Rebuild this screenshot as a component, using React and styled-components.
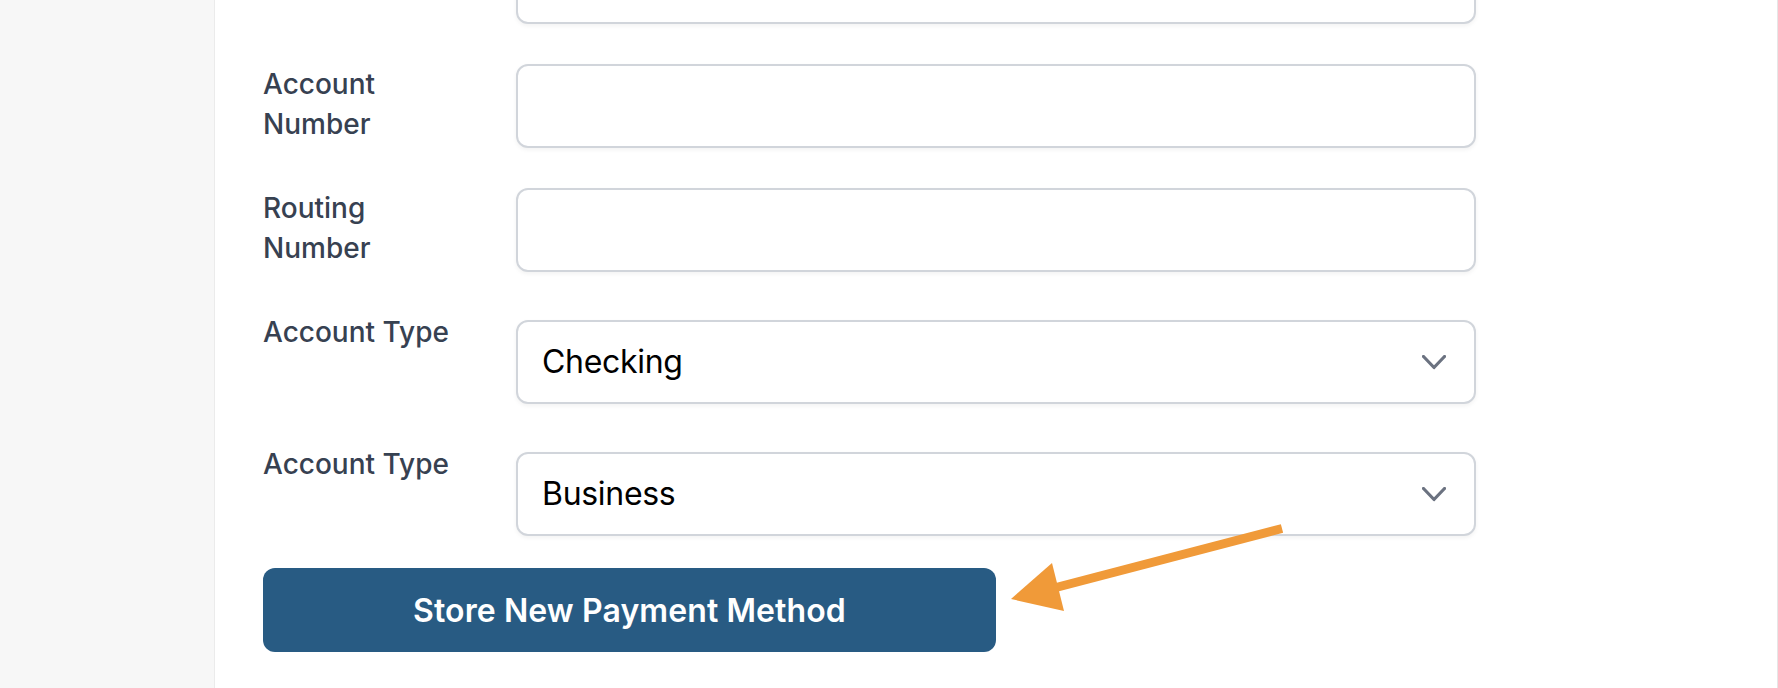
import React from "react";
import styled, { createGlobalStyle } from "styled-components";

const GlobalStyle = createGlobalStyle`
  html, body {
    margin: 0;
    padding: 0;
    background: #ffffff;
    font-family: Inter, "Noto Sans", "Liberation Sans", sans-serif;
  }
  * { box-sizing: border-box; }
`;

const Page = styled.div`
  position: relative;
  display: flex;
  width: 1778px;
  height: 688px;
  overflow: hidden;
`;

const Sidebar = styled.aside`
  flex: 0 0 215px;
  background: #f7f7f7;
  border-right: 1px solid #ebebeb;
`;

const Main = styled.main`
  flex: 1;
  background: #ffffff;
  border-right: 1px solid #e6e6e6;
  padding-left: 48px;
  overflow: hidden;
`;

const Form = styled.form`
  display: flex;
  flex-direction: column;
  gap: 40px;
  margin-top: -60px;
`;

const FieldRow = styled.div`
  display: grid;
  grid-template-columns: 200px 960px;
  column-gap: 53px;
  align-items: start;
`;

const Label = styled.label`
  font-size: 28px;
  line-height: 40px;
  font-weight: 500;
  color: #374151;
  min-height: 40px;
`;

const TextInput = styled.input`
  width: 960px;
  height: 84px;
  border: 2px solid #d1d5db;
  border-radius: 12px;
  box-shadow: 0 2px 4px rgba(0, 0, 0, 0.05);
  padding: 0 24px;
  font-family: inherit;
  font-size: 32px;
  color: #000;
  background: #fff;
  outline: none;
`;

const SelectBox = styled.div`
  display: flex;
  align-items: center;
  justify-content: space-between;
  width: 960px;
  height: 84px;
  margin-top: 8px;
  border: 2px solid #d1d5db;
  border-radius: 12px;
  box-shadow: 0 2px 4px rgba(0, 0, 0, 0.05);
  padding: 0 28px 0 24px;
  font-size: 32px;
  line-height: 48px;
  letter-spacing: -0.3px;
  color: #000;
  background: #fff;
`;

const Chevron = styled.svg`
  display: block;
  width: 24px;
  height: 15px;
  margin-top: 1px;
`;

const ButtonRow = styled.div`
  margin-top: 32px;
`;

const PrimaryButton = styled.button`
  display: flex;
  align-items: center;
  justify-content: center;
  width: 733px;
  height: 84px;
  border: none;
  border-radius: 12px;
  background: #285b83;
  color: #ffffff;
  font-family: inherit;
  font-size: 32px;
  font-weight: 600;
  letter-spacing: 0.1px;
  cursor: pointer;
`;

const ArrowOverlay = styled.svg`
  position: absolute;
  left: 1000px;
  top: 510px;
  width: 300px;
  height: 110px;
  pointer-events: none;
`;

function Select({ value }) {
  return (
    <SelectBox>
      <span>{value}</span>
      <Chevron viewBox="0 0 24 15">
        <polyline
          points="1.5,1.5 12,12.5 22.5,1.5"
          fill="none"
          stroke="#6b7280"
          strokeWidth="3.2"
          strokeLinecap="round"
          strokeLinejoin="round"
        />
      </Chevron>
    </SelectBox>
  );
}

export default function App() {
  return (
    <>
      <GlobalStyle />
      <Page>
        <Sidebar />
        <Main>
          <Form onSubmit={(e) => e.preventDefault()}>
            <FieldRow>
              <Label />
              <TextInput type="text" aria-label="Bank Name" />
            </FieldRow>
            <FieldRow>
              <Label>Account Number</Label>
              <TextInput type="text" />
            </FieldRow>
            <FieldRow>
              <Label>Routing Number</Label>
              <TextInput type="text" />
            </FieldRow>
            <FieldRow>
              <Label>Account Type</Label>
              <Select value="Checking" />
            </FieldRow>
            <FieldRow>
              <Label>Account Type</Label>
              <Select value="Business" />
            </FieldRow>
          </Form>
          <ButtonRow>
            <PrimaryButton type="button">Store New Payment Method</PrimaryButton>
          </ButtonRow>
        </Main>
        <ArrowOverlay viewBox="0 0 300 110">
          <line x1="282" y1="18.5" x2="56" y2="77.5" stroke="#f09a39" strokeWidth="9" />
          <polygon points="11,89 52,53 64,101" fill="#f09a39" />
        </ArrowOverlay>
      </Page>
    </>
  );
}
